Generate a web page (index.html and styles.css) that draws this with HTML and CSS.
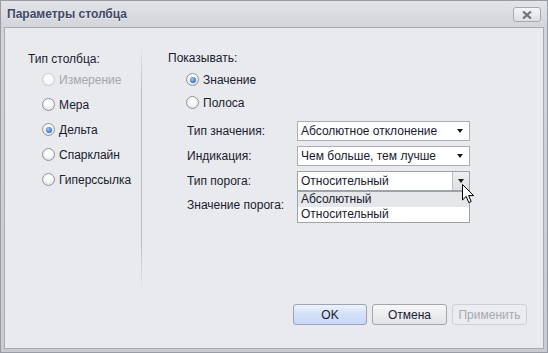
FILE: index.html
```html
<!DOCTYPE html>
<html lang="ru">
<head>
<meta charset="utf-8">
<title>Параметры столбца</title>
<link rel="stylesheet" href="styles.css">
</head>
<body>
<div class="window">
  <div class="titlebar">
    <span class="title">Параметры столбца</span>
    <button class="close" type="button" aria-label="Закрыть">
      <svg width="12" height="8" viewBox="0 0 12 8"><path d="M2 0.5 L10 7.5 M10 0.5 L2 7.5" stroke="#6e737e" stroke-width="2.2" fill="none"/></svg>
    </button>
  </div>
  <div class="client">
    <div class="main">
      <div class="left-col">
        <div class="group-label">Тип столбца:</div>
        <div class="radio-row disabled"><span class="radio"></span><span>Измерение</span></div>
        <div class="radio-row"><span class="radio"></span><span>Мера</span></div>
        <div class="radio-row"><span class="radio checked"></span><span>Дельта</span></div>
        <div class="radio-row"><span class="radio"></span><span>Спарклайн</span></div>
        <div class="radio-row"><span class="radio"></span><span>Гиперссылка</span></div>
      </div>
      <div class="separator"></div>
      <div class="right-col">
        <div class="group-label right">Показывать:</div>
        <div class="radio-row short"><span class="radio checked"></span><span>Значение</span></div>
        <div class="radio-row short"><span class="radio"></span><span>Полоса</span></div>
        <div class="form">
          <div class="form-row">
            <span class="form-label">Тип значения:</span>
            <div class="combo"><span class="combo-text">Абсолютное отклонение</span><span class="combo-btn"><span class="arrow"></span></span></div>
          </div>
          <div class="form-row">
            <span class="form-label">Индикация:</span>
            <div class="combo"><span class="combo-text">Чем больше, тем лучше</span><span class="combo-btn"><span class="arrow"></span></span></div>
          </div>
          <div class="form-row">
            <span class="form-label">Тип порога:</span>
            <div class="combo open">
              <span class="combo-text">Относительный</span><span class="combo-btn hot"><span class="arrow"></span></span>
              <div class="dropdown">
                <div class="item selected">Абсолютный</div>
                <div class="item">Относительный</div>
              </div>
              <svg class="cursor" width="13" height="20" viewBox="0 0 13 20"><path d="M0.5 0.5 L0.5 16 L4.2 12.4 L6.8 18.6 L9.2 17.6 L6.6 11.6 L11.6 11.6 Z" fill="#fff" stroke="#000" stroke-width="1" stroke-linejoin="miter"/></svg>
            </div>
          </div>
          <div class="form-row">
            <span class="form-label">Значение порога:</span>
          </div>
        </div>
      </div>
    </div>
    <div class="footer">
      <button class="btn default" type="button">OK</button>
      <button class="btn" type="button">Отмена</button>
      <button class="btn disabled" type="button">Применить</button>
    </div>
  </div>
</div>
</body>
</html>
```

FILE: styles.css
```css
* { box-sizing: border-box; }
html, body { margin: 0; padding: 0; }
body {
  width: 548px;
  height: 353px;
  font-family: "Liberation Sans", Arial, sans-serif;
  font-size: 12px;
  color: #18202e;
  background: #fff;
}
.window {
  width: 548px;
  height: 353px;
  display: flex;
  flex-direction: column;
  border: 1px solid #989ca6;
  background: linear-gradient(#e3e4e8, #d2d4d9 27px, #c9cbd1 100%);
  padding: 0 3px 3px 3px;
}
.titlebar {
  height: 26px;
  flex: none;
  display: flex;
  align-items: center;
  justify-content: space-between;
  padding-left: 3px;
}
.title {
  font-weight: bold;
  font-size: 12px;
  color: #3e4a66;
  text-shadow: 0 1px 0 rgba(255,255,255,0.5);
}
.close {
  width: 28px;
  height: 15px;
  margin-right: 3px;
  margin-top: 1px;
  border: 1px solid #a4a8b0;
  border-radius: 3px;
  background: linear-gradient(#f4f4f6, #dfe0e4);
  padding: 0;
  display: flex;
  align-items: center;
  justify-content: center;
}
.client {
  flex: 1;
  display: flex;
  flex-direction: column;
  background: #e9eaee;
  border: 1px solid #a8abb3;
}
.main {
  flex: 1;
  display: flex;
}
.left-col {
  width: 136px;
  padding: 23px 0 0 23px;
}
.group-label {
  height: 16px;
  line-height: 16px;
}
.group-label.right { margin-bottom: 2px; }
.radio-row {
  height: 25px;
  display: flex;
  align-items: center;
  padding-left: 14px;
}
.radio-row.short { height: 23px; padding-left: 18px; }
.radio-row.disabled { color: #a3a6ad; }
.radio {
  width: 13px;
  height: 13px;
  border-radius: 50%;
  border: 1px solid #8f939b;
  background: radial-gradient(circle at 50% 35%, #ffffff 30%, #e4e5e8 75%, #cfd1d6 100%);
  margin-right: 4px;
  flex: none;
  position: relative;
}
.radio-row.disabled .radio {
  border-color: #c6c8cd;
  background: radial-gradient(circle at 50% 35%, #fafafa 30%, #eeeff1 100%);
}
.radio.checked::after {
  content: "";
  position: absolute;
  left: 2.5px;
  top: 2.5px;
  width: 6px;
  height: 6px;
  border-radius: 50%;
  background: radial-gradient(circle at 40% 35%, #9ec0f2 0%, #4f7fd0 60%, #2d5aa8 100%);
  box-shadow: 0 0 1px #7b9ad0;
}
.separator {
  width: 1px;
  margin: 12px 0 9px 0;
  background: linear-gradient(#e9eaee, #babdc4 20%, #babdc4 80%, #e9eaee);
  flex: none;
}
.right-col {
  flex: 1;
  padding: 22px 0 0 26px;
}
.form {
  margin-top: 7px;
  display: flex;
  flex-direction: column;
  gap: 5px;
}
.form-row {
  height: 20px;
  display: flex;
  align-items: center;
  padding-left: 19px;
}
.form-row:last-child { margin-top: -1px; }
.form-label {
  width: 110px;
  flex: none;
}
.combo {
  width: 173px;
  height: 20px;
  border: 1px solid #abaeb5;
  background: #fff;
  display: flex;
  align-items: center;
  position: relative;
}
.combo-text {
  flex: 1;
  padding-left: 3px;
  white-space: nowrap;
}
.combo-btn {
  width: 17px;
  height: 18px;
  display: flex;
  align-items: center;
  justify-content: center;
}
.combo-btn.hot {
  background: linear-gradient(#eeeff1, #dcdee2);
  border-left: 1px solid #b9bcc3;
}
.combo.open { border-color: #9da1a9; }
.arrow {
  width: 0;
  height: 0;
  border-left: 3.5px solid transparent;
  border-right: 3.5px solid transparent;
  border-top: 4px solid #1b1b1b;
  margin-right: 1px;
}
.dropdown {
  position: absolute;
  left: -1px;
  top: 19px;
  width: 173px;
  border: 1px solid #9da1a9;
  background: #fff;
  z-index: 2;
}
.item {
  height: 15px;
  line-height: 15px;
  padding-left: 3px;
}
.item.selected { background: #e6e7ea; }
.cursor {
  position: absolute;
  left: 164px;
  top: 12px;
  z-index: 3;
}
.footer {
  flex: none;
  display: flex;
  justify-content: flex-end;
  gap: 5px;
  padding: 0 16px 23px 0;
}
.btn {
  width: 75px;
  height: 21px;
  border: 1px solid #a2a6ae;
  border-radius: 3px;
  background: linear-gradient(#f7f7f8, #e2e3e7);
  font-family: "Liberation Sans", Arial, sans-serif;
  font-size: 12px;
  color: #18202e;
  padding: 0;
}
.btn.default {
  width: 74px;
  background: linear-gradient(#eef3fd, #d3e0f8 50%, #c8d8f6);
  border-color: #9aa4b6;
}
.btn.disabled {
  color: #a6a9b0;
  border-color: #cdd0d5;
  background: #ebecef;
}
```
